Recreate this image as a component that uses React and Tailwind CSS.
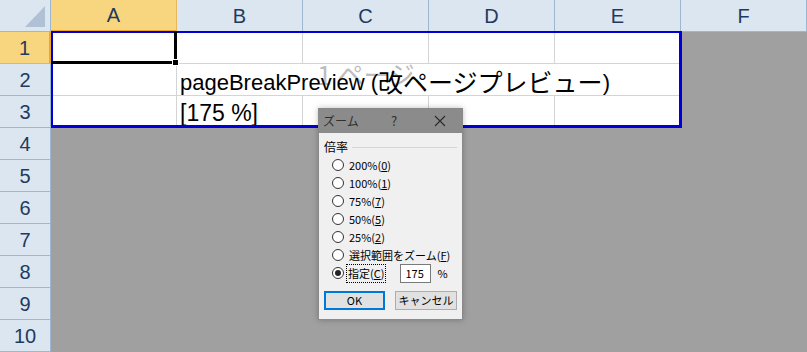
import React from 'react';

const COLS = ['A', 'B', 'C', 'D', 'E', 'F'];
const ROWS = [1, 2, 3, 4, 5, 6, 7, 8, 9, 10];

const sans = "font-['Liberation_Sans','Noto_Sans_CJK_JP',sans-serif]";
const jp = "font-['Noto_Sans_CJK_JP','Noto_Sans',sans-serif]";

const options = [
  { label: '200%', key: '0' },
  { label: '100%', key: '1' },
  { label: '75%', key: '7' },
  { label: '50%', key: '5' },
  { label: '25%', key: '2' },
  { label: '選択範囲をズーム', key: 'F' },
];

const Radio = ({ checked }) => (
  <span className="relative w-[12px] h-[12px] rounded-full border border-[#333] bg-white flex items-center justify-center shrink-0">
    {checked && <span className="w-[6px] h-[6px] rounded-full bg-[#222]" />}
  </span>
);

const ZoomDialog = () => (
  <div className={`absolute left-[318px] top-[108px] w-[145px] h-[212px] flex flex-col border border-[#8a8a8a] shadow-[0_0_6px_rgba(0,0,0,0.25)] z-30 ${jp}`}>
    {/* タイトルバー */}
    <div className="h-[24px] bg-[#8b8b8b] flex items-center text-[#2e2e2e] text-[12px] pl-[4px]">
      <span className="w-[68px]">ズーム</span>
      <span className="w-[40px] text-[13px]">?</span>
      <svg width="12" height="12" viewBox="0 0 12 12" className="ml-[3px]">
        <path d="M1 1 L11 11 M11 1 L1 11" stroke="#2a2a2a" strokeWidth="1.1" />
      </svg>
    </div>

    <div className="flex-1 bg-[#f0f0f0] px-[5px] pt-[6px] text-[11px] text-black">
      <div className="h-[16px] flex items-center gap-[4px]">
        <span className="text-[12px]">倍率</span>
        <span className="flex-1 h-px bg-[#d5d5d5]" />
      </div>

      <div className="mt-px flex flex-col pl-[8px]">
        {options.map((o) => (
          <div key={o.key} className="h-[18px] flex items-center gap-[5px]">
            <Radio />
            <span className="leading-none">
              {o.label}(<span className="underline">{o.key}</span>)
            </span>
          </div>
        ))}
        <div className="h-[18px] flex items-center gap-[2px]">
          <Radio checked />
          <span className="border border-dotted border-black px-px leading-[16px] h-[19px]">
            指定(<span className="underline">C</span>)
          </span>
          <span className="ml-[12px] w-[31px] h-[19px] bg-white border border-[#7a7a7a] flex items-center pl-[4px]">175</span>
          <span className="ml-[4px]">%</span>
        </div>
      </div>

      <div className="mt-[9px] flex gap-[10px]">
        <button className="w-[61px] h-[19px] bg-[#e1e1e1] border-2 border-[#0078d7] flex items-center justify-center text-[11px]">
          OK
        </button>
        <button className="w-[62px] h-[19px] bg-[#e1e1e1] border border-[#adadad] flex items-center justify-center text-[11px]">
          キャンセル
        </button>
      </div>
    </div>
  </div>
);

export default function App() {
  const inPage = (r, c) => r <= 3 && c <= 4;

  return (
    <div className={`relative w-[807px] h-[352px] overflow-hidden bg-[#a0a0a0] ${sans}`}>
      <div className="grid grid-cols-[51px_repeat(6,126px)]">
        {/* 左上コーナー */}
        <div className="h-[32px] bg-[#dce6f1] border-r border-b border-[#9eb6ce] relative">
          <svg width="51" height="32" className="absolute inset-0">
            <polygon points="25,27 45,6 45,27" fill="#b0c1d6" />
          </svg>
        </div>
        {COLS.map((c, i) => (
          <div
            key={c}
            className={`h-[32px] flex items-center justify-center text-[20px] text-[#1f3a5f] border-r ${
              i === 0
                ? 'bg-[#f8d67f] border-[#e9b45a] border-b-2 border-b-[#f0a52e]'
                : 'bg-[#dce6f1] border-[#9eb6ce] border-b'
            }`}
          >
            {c}
          </div>
        ))}

        {ROWS.map((r) => (
          <React.Fragment key={r}>
            <div
              className={`h-[32px] flex items-center justify-center text-[20px] text-[#1f3a5f] border-b ${
                r === 1
                  ? 'bg-[#f8d67f] border-[#e9b45a] border-r-2 border-r-[#f0a52e]'
                  : 'bg-[#dce6f1] border-[#9eb6ce] border-r'
              }`}
            >
              {r}
            </div>
            {COLS.map((c, ci) => {
              if (!inPage(r, ci)) return <div key={c} className="h-[32px] bg-[#a0a0a0]" />;
              const noRight = r === 2 && ci >= 1 && ci <= 3;
              return (
                <div
                  key={c}
                  className={`h-[32px] bg-white border-b border-[#d4d4d4] ${noRight ? '' : 'border-r'} relative`}
                >
                  {r === 2 && ci === 1 && (
                    <div className="absolute left-[3px] bottom-[1px] z-10 whitespace-nowrap flex items-end text-black leading-none">
                      <span className="text-[22px]">pageBreakPreview (</span>
                      <span className={`text-[25px] ${jp} leading-none`}>改ページプレビュー</span>
                      <span className="text-[22px]">)</span>
                    </div>
                  )}
                  {r === 3 && ci === 1 && (
                    <div className="absolute left-[3px] bottom-[2px] z-10 whitespace-nowrap text-[23px] leading-none text-black">
                      [175 %]
                    </div>
                  )}
                </div>
              );
            })}
          </React.Fragment>
        ))}
      </div>

      {/* 透かし文字 */}
      <div className={`absolute left-[51px] top-[54px] w-[630px] flex justify-center text-[26px] text-[#bdbdbd] z-0 pointer-events-none ${jp}`}>
        1 ページ
      </div>

      {/* 改ページ枠 */}
      <div className="absolute left-[51px] top-[31px] w-[631px] h-[97px] border-t-2 border-l-2 border-r-[3px] border-b-[3px] border-[#0000d4] z-20 pointer-events-none" />

      {/* 選択セル */}
      <div className="absolute left-[51px] top-[32px] w-[126px] h-[32px] border-r-[3px] border-b-[3px] border-black z-20" />
      <div className="absolute left-[172px] top-[59px] w-[7px] h-[7px] bg-black border border-white z-20" />

      <ZoomDialog />
    </div>
  );
}
